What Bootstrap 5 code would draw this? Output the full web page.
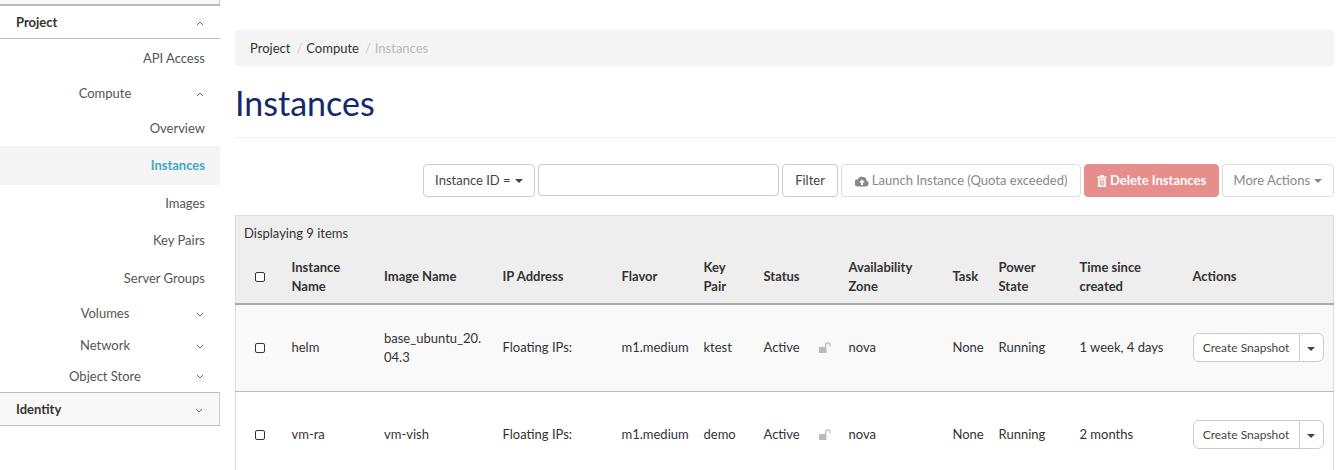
<!DOCTYPE html>
<html lang="en">
<head>
    <meta charset="UTF-8">
    <meta name="viewport" content="width=device-width, initial-scale=1.0">
    <title>Instances</title>
    <link rel="stylesheet" href="https://cdn.jsdelivr.net/npm/bootstrap@5.3.0/dist/css/bootstrap.min.css">
    <style>
        html, body { height: 470px; overflow: hidden; }
        body { font-family: "Lato", "Liberation Sans", sans-serif; font-size: 13px; color: #333; background: #fff; }
        a { color: inherit; text-decoration: none; }

        /* sidebar */
        .side-nav { width: 220px; flex: none; height: 470px; }
        .side-top { height: 6px; background: #f8f8f8; border-bottom: 2px solid #bbb; border-right: 1px solid #ccc; }
        .side-head { height: 33px; padding: 2px 16px 0; font-weight: 700; color: #333; border-bottom: 1px solid #bbb; }
        .side-head.closed { height: 34px; background: #f8f8f8; border-top: 1px solid #bbb; border-right: 1px solid #ccc; border-bottom: 1px solid #bbb; }
        .side-leaf { height: 37px; padding-right: 15px; color: #555; }
        .side-leaf.active { height: 39px; margin-top: -1px; background: #f5f5f5; color: #3fa9c4; font-weight: 700; }
        .side-sub { height: 32px; color: #555; }
        .side-sub.first { height: 34px; }
        .side-sub .sub-label { width: 170px; margin-left: 20px; text-align: center; }
        .side-sub svg { margin-left: 6px; }
        .side-gap { height: 1px; }
        .side-short { height: 31px; }
        .nudge { padding-top: 2px; }

        /* content */
        .page-main { padding: 30px 5px 0 15px; min-width: 0; }
        .crumbs { height: 36px; background: #f4f4f4; border-radius: 4px; padding: 2px 15px 0; margin: 0; }
        .crumbs .breadcrumb-item + .breadcrumb-item { padding-left: 6px; }
        .crumbs .breadcrumb-item + .breadcrumb-item::before { color: #ccc; padding-right: 4px; }
        .crumbs .breadcrumb-item.active { color: #bbb; }
        .page-title { height: 72px; margin: 0; border-bottom: 1px solid #eee; font-family: inherit; font-size: 34px; font-weight: 400; color: #14296b; line-height: 74px; }
        .tools { margin-top: 26px; gap: 3px; height: 34px; }
        .tool-btn { height: 33px; font-size: 13px; padding: 0; border: 1px solid #ccc; border-radius: 4px; color: #444; background: #fff; }
        .tool-btn.disabled { opacity: 1; border-color: #ddd; color: #888; }
        .w-type { width: 112px; }
        .w-filter { width: 56px; }
        .w-launch { width: 240px; }
        .w-more { width: 112px; }
        .w-delete { width: 135px; background: #e58e8b; border-color: #e58e8b; color: #fff; font-weight: 700; }
        .w-delete.disabled { background: #e58e8b; border-color: #e58e8b; color: #fff; }
        .tool-input { width: 241px; height: 32px; border: 1px solid #ccc; border-radius: 4px; }
        .caret { display: inline-block; border-top: 4px solid currentColor; border-left: 4px solid transparent; border-right: 4px solid transparent; vertical-align: middle; margin-left: 1px; }

        .inst-table { margin: 17px 0 0; table-layout: fixed; width: 1099px; border: 1px solid #ddd; border-bottom: 0; font-size: 13px; line-height: 19px; --bs-table-bg: transparent; }
        .inst-table > * > * > * { padding: 8px; border: 0; vertical-align: middle; color: #333; }
        .inst-table thead { background: #eee; }
        .inst-table thead th { font-weight: 700; }
        .inst-table .count-row th { padding: 0 8px; height: 35px; font-weight: 400; }
        .inst-table .head-row th { height: 53px; padding-top: 0; padding-bottom: 0; border-bottom: 2px solid #aaa; }
        .inst-table tbody tr { height: 86px; border-bottom: 1px solid #bbb; }
        .inst-table tbody tr.odd { height: 88px; background: #f9f9f9; }
        .col-chk { width: 48px; }
        .col-name { width: 92.5px; }
        .col-img { width: 118.5px; }
        .col-ip { width: 119px; }
        .col-flv { width: 82px; }
        .col-key { width: 60px; }
        .col-st { width: 85px; }
        .col-az { width: 104px; }
        .col-task { width: 46px; }
        .col-pw { width: 81px; }
        .col-time { width: 113px; }
        .col-act { width: 149px; }
        .form-check-input.inst-chk[type=checkbox] { width: 10px; height: 10px; margin: 0 0 0 11px; display: block; border: 1px solid #333; border-radius: 2px; }
        .img-cell { word-break: break-all; }
        .lock-ico { margin-left: 19px; vertical-align: -1px; }
        .snap-btn { height: 29px; font-size: 12px; padding: 0; border-color: #ccc; color: #444; background: #fff; line-height: 27px; }
        .snap-main { width: 107px; }
        .snap-tog { width: 25px; flex: none !important; }
    </style>
</head>
<body>
<div class="d-flex">

    <!-- Sidebar -->
    <nav class="side-nav">
        <div class="side-top"></div>
        <a href="#" class="side-head d-flex align-items-center justify-content-between">
            Project
            <svg width="8" height="5" viewBox="0 0 8 5"><path d="M1 4l3-3 3 3" fill="none" stroke="#666"/></svg>
        </a>
        <a href="#" class="side-leaf nudge d-flex align-items-center justify-content-end">API Access</a>
        <a href="#" class="side-sub first nudge d-flex align-items-center">
            <span class="sub-label">Compute</span>
            <svg width="8" height="5" viewBox="0 0 8 5"><path d="M1 4l3-3 3 3" fill="none" stroke="#666"/></svg>
        </a>
        <a href="#" class="side-leaf d-flex align-items-center justify-content-end">Overview</a>
        <a href="#" class="side-leaf active d-flex align-items-center justify-content-end">Instances</a>
        <a href="#" class="side-leaf d-flex align-items-center justify-content-end">Images</a>
        <a href="#" class="side-leaf d-flex align-items-center justify-content-end">Key Pairs</a>
        <a href="#" class="side-leaf nudge d-flex align-items-center justify-content-end">Server Groups</a>
        <div class="side-gap"></div>
        <a href="#" class="side-sub nudge d-flex align-items-center">
            <span class="sub-label">Volumes</span>
            <svg width="8" height="5" viewBox="0 0 8 5"><path d="M1 1l3 3 3-3" fill="none" stroke="#666"/></svg>
        </a>
        <a href="#" class="side-sub nudge d-flex align-items-center">
            <span class="sub-label">Network</span>
            <svg width="8" height="5" viewBox="0 0 8 5"><path d="M1 1l3 3 3-3" fill="none" stroke="#666"/></svg>
        </a>
        <a href="#" class="side-sub side-short d-flex align-items-center">
            <span class="sub-label">Object Store</span>
            <svg width="8" height="5" viewBox="0 0 8 5"><path d="M1 1l3 3 3-3" fill="none" stroke="#666"/></svg>
        </a>
        <a href="#" class="side-head closed d-flex align-items-center justify-content-between">
            Identity
            <svg width="8" height="5" viewBox="0 0 8 5"><path d="M1 1l3 3 3-3" fill="none" stroke="#666"/></svg>
        </a>
    </nav>

    <!-- Main content -->
    <main class="page-main flex-grow-1">
        <ol class="breadcrumb crumbs align-items-center">
            <li class="breadcrumb-item"><a href="#">Project</a></li>
            <li class="breadcrumb-item"><a href="#">Compute</a></li>
            <li class="breadcrumb-item active">Instances</li>
        </ol>
        <h1 class="page-title">Instances</h1>

        <div class="tools d-flex justify-content-end align-items-start">
            <button class="btn tool-btn w-type">Instance ID = <span class="caret"></span></button>
            <input type="text" class="form-control tool-input">
            <button class="btn tool-btn w-filter">Filter</button>
            <button class="btn tool-btn w-launch disabled">
                <svg width="14" height="11" viewBox="0 0 14 11"><path fill="#888" d="M11.3 4.6A3 3 0 0 0 8 1 3.6 3.6 0 0 0 2.9 3.200 3.200 3.200 0 0 0 3.200 10.500H11A3 3 0 0 0 11.300 4.600ZM7 3.500l3 3H8V9H6V6.500H4Z"/></svg>
                Launch Instance (Quota exceeded)
            </button>
            <button class="btn tool-btn w-delete disabled">
                <svg width="10" height="12" viewBox="0 0 10 12"><path fill="#fff" d="M3.500 0h3l.7 1.500H10v1.200H0V1.500h2.800ZM1 3.500h8V12H1Zm1.700 1.300v6h1v-6Zm1.800 0v6h1v-6Zm1.800 0v6h1v-6Z"/></svg>
                Delete Instances
            </button>
            <button class="btn tool-btn w-more disabled">More Actions <span class="caret"></span></button>
        </div>

        <table class="table inst-table">
            <colgroup>
                <col class="col-chk"><col class="col-name"><col class="col-img"><col class="col-ip">
                <col class="col-flv"><col class="col-key"><col class="col-st"><col class="col-az">
                <col class="col-task"><col class="col-pw"><col class="col-time"><col class="col-act">
            </colgroup>
            <thead>
                <tr class="count-row"><th colspan="12">Displaying 9 items</th></tr>
                <tr class="head-row">
                    <th><input type="checkbox" class="form-check-input inst-chk"></th>
                    <th>Instance Name</th>
                    <th>Image Name</th>
                    <th>IP Address</th>
                    <th>Flavor</th>
                    <th>Key Pair</th>
                    <th>Status</th>
                    <th>Availability Zone</th>
                    <th>Task</th>
                    <th>Power State</th>
                    <th>Time since created</th>
                    <th>Actions</th>
                </tr>
            </thead>
            <tbody>
                <tr class="odd">
                    <td><input type="checkbox" class="form-check-input inst-chk"></td>
                    <td>helm</td>
                    <td class="img-cell">base_ubuntu_20.04.3</td>
                    <td>Floating IPs:</td>
                    <td>m1.medium</td>
                    <td>ktest</td>
                    <td>Active<svg class="lock-ico" width="12" height="11" viewBox="0 0 12 11"><path fill="#bbb" d="M0 5h7.500v6H0ZM6 5V3a2.800 2.800 0 0 1 5.600 0v1.500h-1.200V3A1.600 1.600 0 0 0 7.200 3v2Z"/></svg></td>
                    <td>nova</td>
                    <td>None</td>
                    <td>Running</td>
                    <td>1 week, 4 days</td>
                    <td>
                        <div class="btn-group">
                            <button class="btn snap-btn snap-main">Create Snapshot</button>
                            <button class="btn snap-btn snap-tog"><span class="caret m-0"></span></button>
                        </div>
                    </td>
                </tr>
                <tr>
                    <td><input type="checkbox" class="form-check-input inst-chk"></td>
                    <td>vm-ra</td>
                    <td>vm-vish</td>
                    <td>Floating IPs:</td>
                    <td>m1.medium</td>
                    <td>demo</td>
                    <td>Active<svg class="lock-ico" width="12" height="11" viewBox="0 0 12 11"><path fill="#bbb" d="M0 5h7.500v6H0ZM6 5V3a2.800 2.800 0 0 1 5.600 0v1.500h-1.200V3A1.600 1.600 0 0 0 7.200 3v2Z"/></svg></td>
                    <td>nova</td>
                    <td>None</td>
                    <td>Running</td>
                    <td>2 months</td>
                    <td>
                        <div class="btn-group">
                            <button class="btn snap-btn snap-main">Create Snapshot</button>
                            <button class="btn snap-btn snap-tog"><span class="caret m-0"></span></button>
                        </div>
                    </td>
                </tr>
            </tbody>
        </table>
    </main>
</div>
<script src="https://cdn.jsdelivr.net/npm/bootstrap@5.3.0/dist/js/bootstrap.bundle.min.js"></script>
</body>
</html>
